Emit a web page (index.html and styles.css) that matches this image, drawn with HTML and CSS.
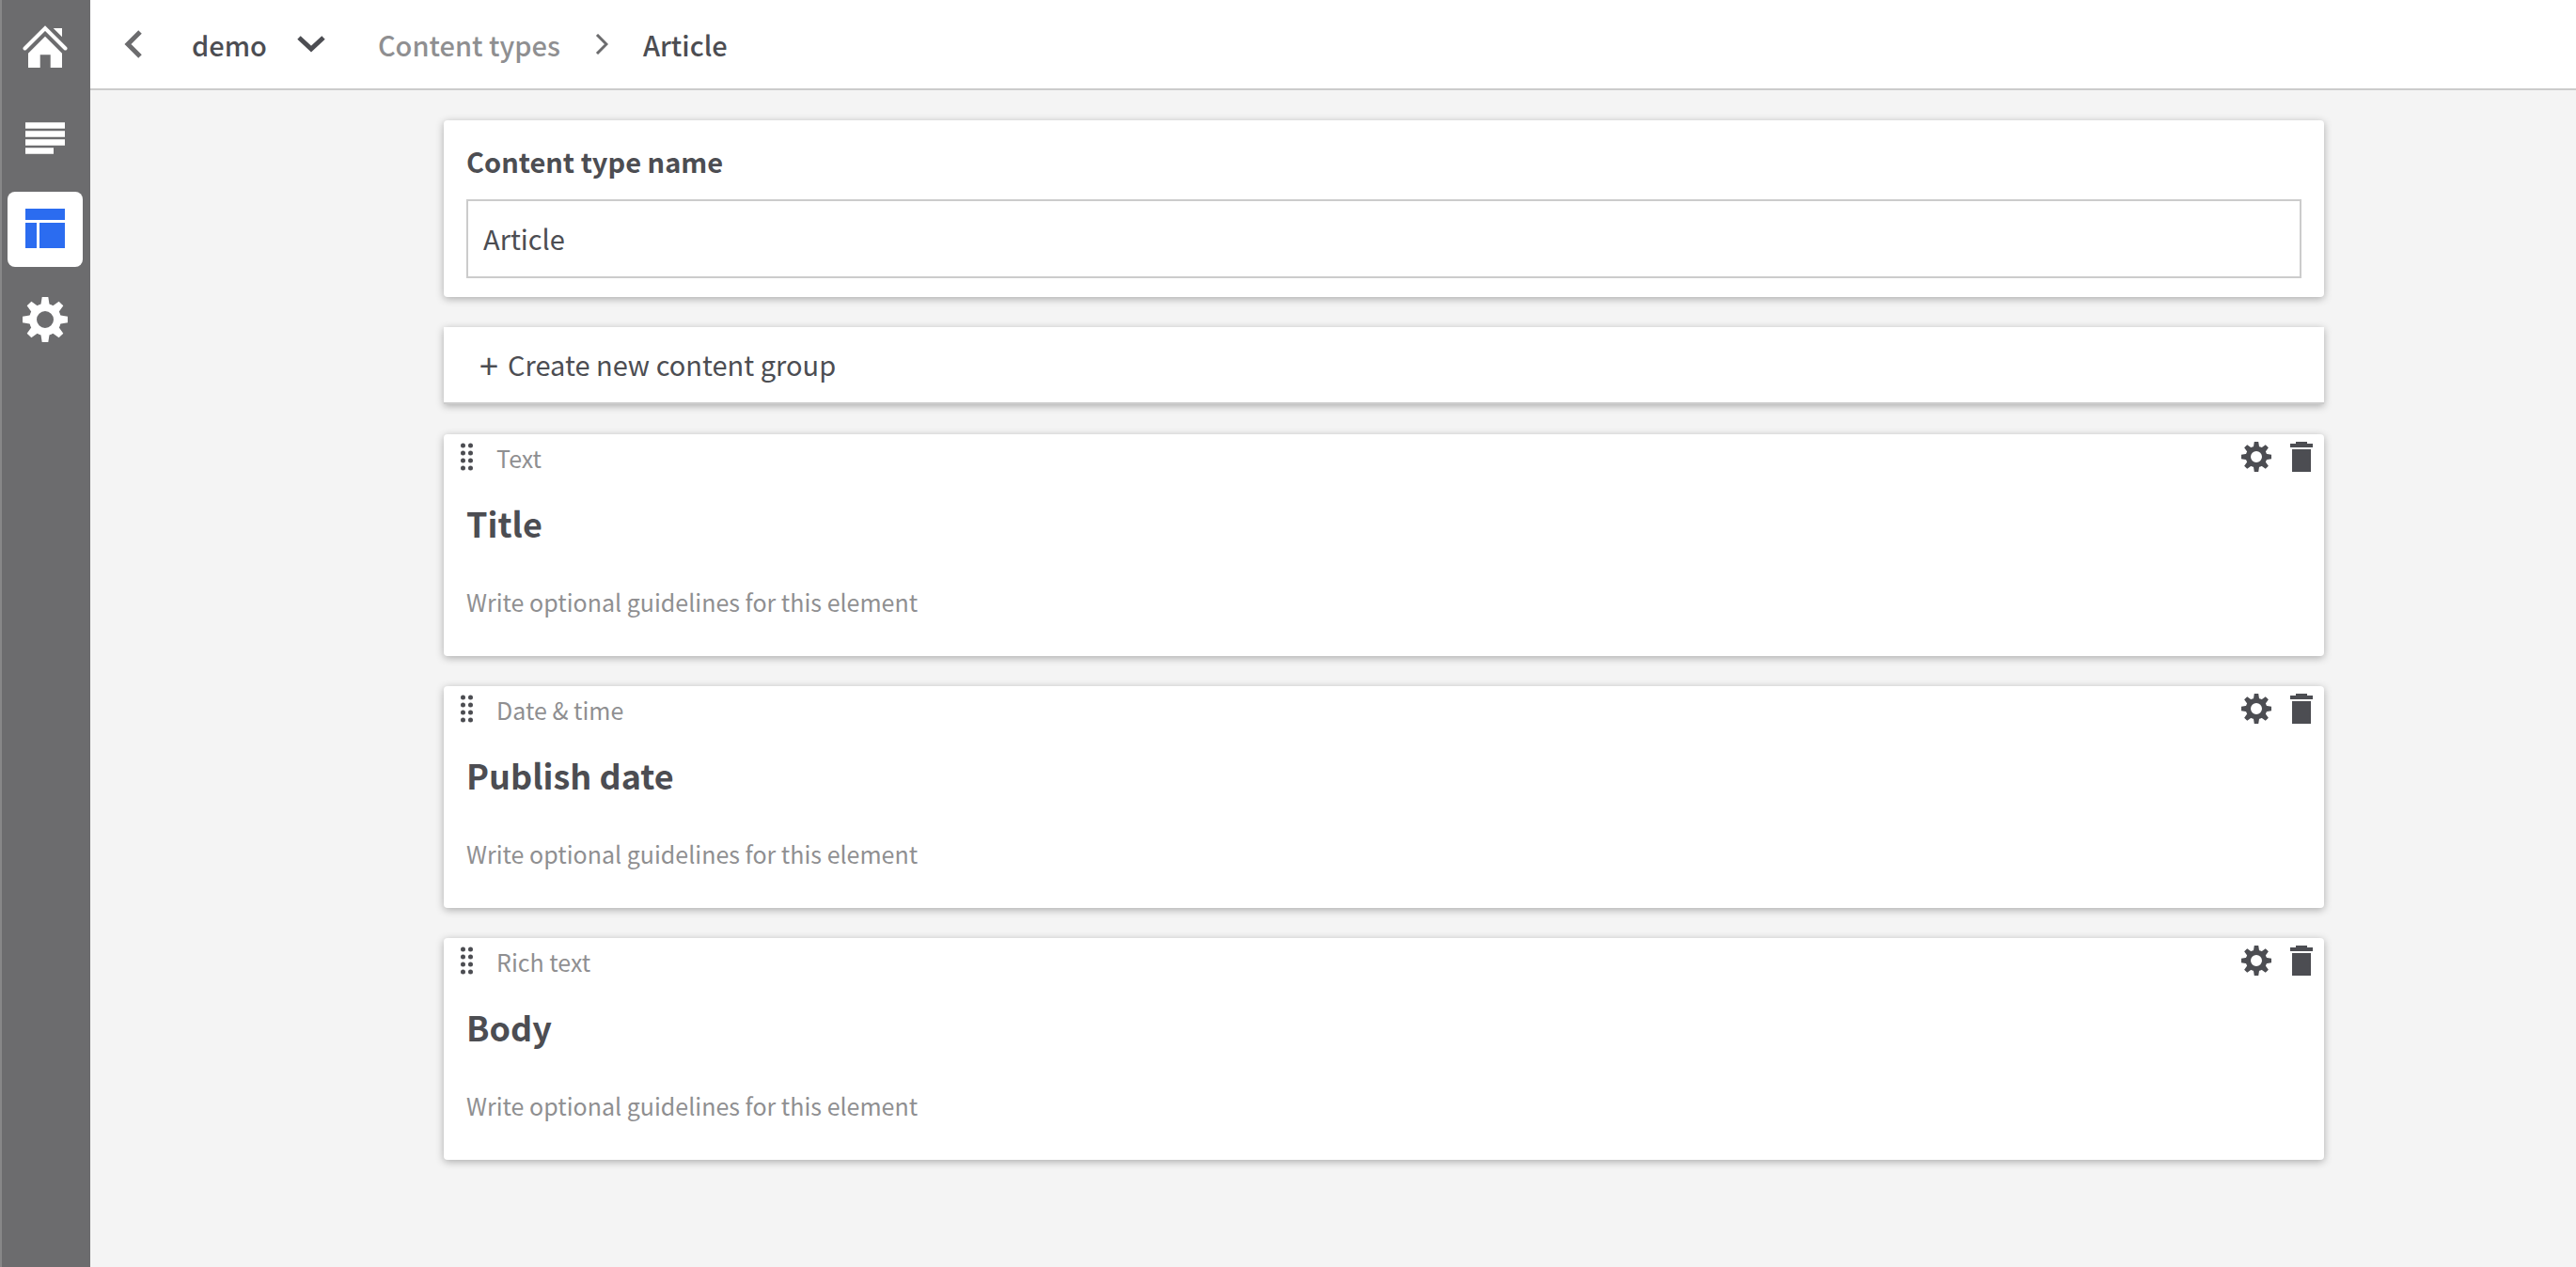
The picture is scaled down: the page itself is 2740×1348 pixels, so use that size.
FILE: index.html
```html
<!DOCTYPE html>
<html lang="en">
<head>
    <meta charset="UTF-8">
    <meta name="viewport" content="width=device-width, initial-scale=1.0">
    <title>Article - Content types</title>
    <link rel="stylesheet" href="styles.css">
</head>
<body>

    <!-- Shared icons -->
    <svg class="icon-defs" aria-hidden="true">
        <symbol id="gear" viewBox="0 0 48 48">
            <circle cx="24" cy="24" r="13" fill="none" stroke="currentColor" stroke-width="8"/>
            <path id="teeth" fill="currentColor" d="M20.7 0h6.6l1.4 9h-9.4zM20.7 48h6.6l1.4-9h-9.4zM0 20.7v6.6l9 1.4v-9.4zM48 20.7v6.6l-9 1.4v-9.4z"/>
            <use href="#teeth" transform="rotate(45 24 24)"/>
        </symbol>
        <symbol id="trash" viewBox="0 0 24 32">
            <path fill="currentColor" d="M6 0h12v2h6v4H0V2h6zM2 8h20v24H2z"/>
        </symbol>
        <symbol id="dots" viewBox="0 0 14 30">
            <path fill="none" stroke="currentColor" stroke-width="5" stroke-linecap="round" d="M2.5 3h0M10.5 3h0M2.5 11h0M10.5 11h0M2.5 19h0M10.5 19h0M2.5 27h0M10.5 27h0"/>
        </symbol>
    </svg>

    <nav class="sidebar">
        <a class="nav-item" href="#home" aria-label="Home">
            <svg width="48" height="52" viewBox="0 0 48 52">
                <path fill="none" stroke="currentColor" stroke-width="4" stroke-linecap="round" d="M2.5 25.5L24 4l21.5 21.5"/>
                <path fill="currentColor" d="M24 12.7l18 18V46H29.7V32.3h-11V46H6V30.7zM32.7 4H42v9.3z"/>
            </svg>
        </a>
        <a class="nav-item" href="#content" aria-label="Content">
            <svg width="42" height="36" viewBox="0 0 42 36">
                <path fill="currentColor" d="M0 .3h42v6.4H0zM0 9.3h42v6.4H0zM0 18.3h42v6.4H0zM0 27.3h30v6.4H0z"/>
            </svg>
        </a>
        <a class="nav-item active" href="#content-types" aria-label="Content types">
            <svg width="42" height="44" viewBox="0 0 42 44">
                <path fill="currentColor" d="M0 0h42v12H0zM0 15h12v27H0zM15 15h27v27H15z"/>
            </svg>
        </a>
        <a class="nav-item" href="#settings" aria-label="Settings">
            <svg width="48" height="48"><use href="#gear"/></svg>
        </a>
    </nav>

    <div class="page">
        <header class="topbar">
            <button class="back-btn" aria-label="Back">
                <svg width="20" height="30" viewBox="0 0 20 30">
                    <path fill="none" stroke="currentColor" stroke-width="5" d="M17 2L4 15l13 13"/>
                </svg>
            </button>
            <button class="project-btn">
                demo
                <svg width="30" height="18" viewBox="0 0 30 18">
                    <path fill="none" stroke="currentColor" stroke-width="5" d="M2 2l13 12L28 2"/>
                </svg>
            </button>
            <div class="breadcrumb">
                <a href="#content-types">Content types</a>
                <svg width="14" height="22" viewBox="0 0 14 22">
                    <path fill="none" stroke="currentColor" stroke-width="3" d="M2 1l10 10L2 21"/>
                </svg>
                <span class="current">Article</span>
            </div>
        </header>

        <main class="content">
            <section class="card name-card">
                <label for="typeName">Content type name</label>
                <input type="text" id="typeName" value="Article">
            </section>

            <button class="group-btn"><span class="plus">+</span>Create new content group</button>

            <section class="card element">
                <div class="element-bar">
                    <svg class="drag" width="14" height="30"><use href="#dots"/></svg>
                    <span class="element-type">Text</span>
                    <button class="icon-btn" aria-label="Settings"><svg width="32" height="32"><use href="#gear"/></svg></button>
                    <button class="icon-btn" aria-label="Delete"><svg width="24" height="32"><use href="#trash"/></svg></button>
                </div>
                <h2>Title</h2>
                <input type="text" aria-label="Title guidelines" placeholder="Write optional guidelines for this element">
            </section>

            <section class="card element">
                <div class="element-bar">
                    <svg class="drag" width="14" height="30"><use href="#dots"/></svg>
                    <span class="element-type">Date &amp; time</span>
                    <button class="icon-btn" aria-label="Settings"><svg width="32" height="32"><use href="#gear"/></svg></button>
                    <button class="icon-btn" aria-label="Delete"><svg width="24" height="32"><use href="#trash"/></svg></button>
                </div>
                <h2>Publish date</h2>
                <input type="text" aria-label="Publish date guidelines" placeholder="Write optional guidelines for this element">
            </section>

            <section class="card element">
                <div class="element-bar">
                    <svg class="drag" width="14" height="30"><use href="#dots"/></svg>
                    <span class="element-type">Rich text</span>
                    <button class="icon-btn" aria-label="Settings"><svg width="32" height="32"><use href="#gear"/></svg></button>
                    <button class="icon-btn" aria-label="Delete"><svg width="24" height="32"><use href="#trash"/></svg></button>
                </div>
                <h2>Body</h2>
                <input type="text" aria-label="Body guidelines" placeholder="Write optional guidelines for this element">
            </section>
        </main>
    </div>

</body>
</html>
```
FILE: styles.css
```css
* {
    box-sizing: border-box;
}

body {
    margin: 0;
    min-height: 100vh;
    display: flex;
    background-color: #f4f4f4;
    color: #4c4d52;
    font-family: "Noto Sans CJK SC", "Noto Sans", sans-serif;
    font-size: 29px;
    line-height: 40px;
}

button,
input {
    font: inherit;
    color: inherit;
    padding: 0;
    border: none;
    background: none;
}

button {
    cursor: pointer;
}

svg {
    display: block;
    flex: none;
}

.icon-defs {
    position: absolute;
    width: 0;
    height: 0;
}

/* Sidebar */
.sidebar {
    flex: none;
    display: flex;
    flex-direction: column;
    gap: 16px;
    width: 96px;
    padding: 12px 8px 12px 6px;
    background-color: #6c6c6e;
    border-left: 2px solid #878788;
}

.nav-item {
    display: flex;
    align-items: center;
    justify-content: center;
    height: 80px;
    border-radius: 8px;
    color: #fff;
}

.nav-item.active {
    background-color: #fff;
    color: #2b6cf0;
}

/* Top bar */
.page {
    flex: 1;
    min-width: 0;
}

.topbar {
    display: flex;
    align-items: center;
    height: 96px;
    padding-left: 36px;
    background-color: #fff;
    border-bottom: 2px solid #ccc;
    font-weight: 500;
}

.back-btn {
    color: #6c6c6e;
}

.project-btn {
    display: flex;
    align-items: center;
    gap: 32px;
    margin-left: 52px;
    font-weight: 500;
}

.breadcrumb {
    display: flex;
    align-items: center;
    gap: 37px;
    margin-left: 56px;
    color: #6c6c6e;
}

.breadcrumb a {
    color: #8f8f91;
    text-decoration: none;
}

.breadcrumb .current {
    color: #4c4d52;
}

/* Cards */
.content {
    display: flex;
    flex-direction: column;
    gap: 32px;
    max-width: 2108px;
    margin: 0 auto;
    padding: 32px 0 32px 108px;
}

.card,
.group-btn {
    background-color: #fff;
    box-shadow: 0 2px 8px rgba(0, 0, 0, 0.3);
}

.card {
    border-radius: 4px;
}

.name-card {
    display: flex;
    flex-direction: column;
    gap: 21px;
    padding: 23px 24px 20px;
}

.name-card label {
    font-weight: bold;
}

.name-card input {
    height: 84px;
    padding: 0 16px 2px;
    border: 2px solid #ccc;
}

.group-btn {
    display: flex;
    align-items: center;
    gap: 10px;
    height: 82px;
    padding: 0 38px 2px;
    border-bottom: 2px solid #ccc;
}

.group-btn .plus {
    font-size: 36px;
}

/* Content type elements */
.element {
    padding: 8px 12px 38px 18px;
    font-size: 25px;
}

.element-bar {
    display: flex;
    align-items: center;
    height: 32px;
    gap: 20px;
}

.element-type {
    flex: 1;
    margin-left: 4px;
    padding-top: 2px;
    color: #8f8f91;
}

.element h2 {
    margin: 30px 6px 40px;
    font-size: 36px;
    line-height: 48px;
}

.element input {
    display: block;
    width: 100%;
    height: 40px;
    padding: 0 6px;
}

.element input::placeholder {
    color: #8f8f91;
    opacity: 1;
}
```
